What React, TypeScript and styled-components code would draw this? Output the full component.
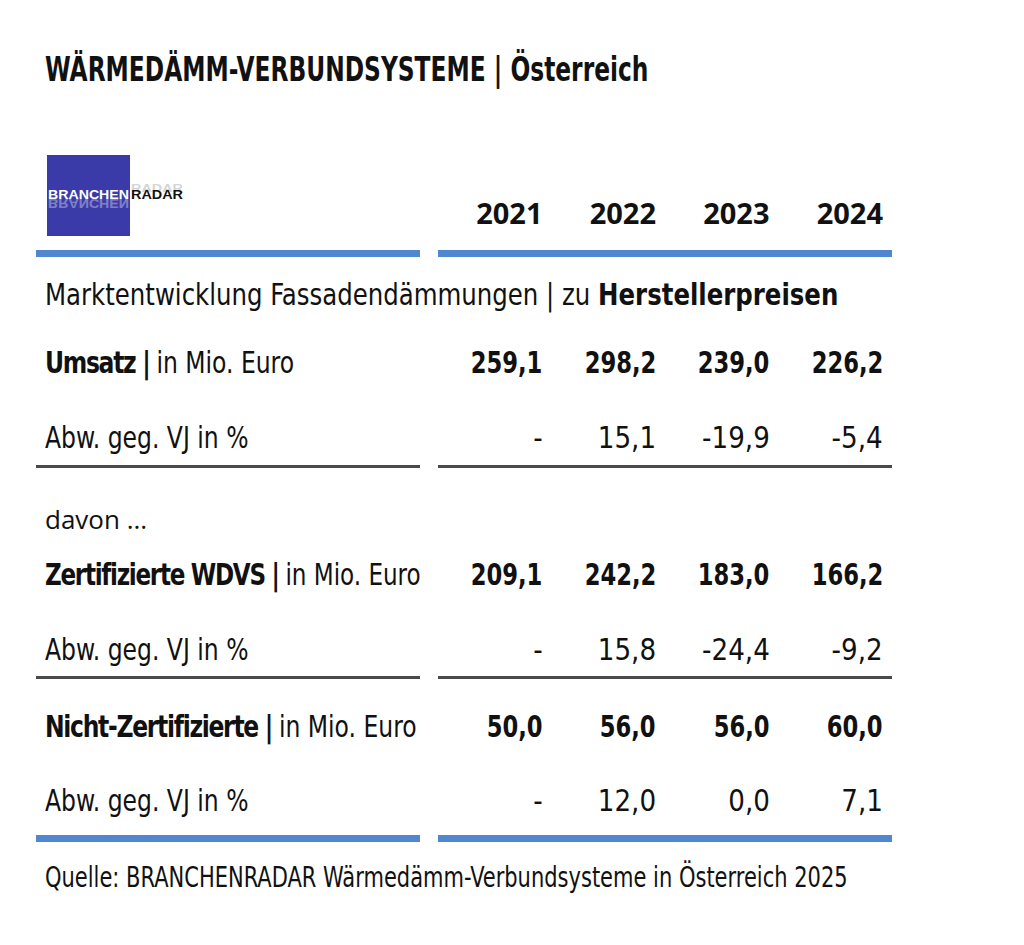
import styled, { createGlobalStyle } from "styled-components";

const COND = `"DejaVu Sans Condensed", "Liberation Sans", sans-serif`;
const WIDE = `"Open Sans", "Liberation Sans", sans-serif`;

const GlobalStyle = createGlobalStyle`
  html, body {
    margin: 0;
    padding: 0;
    background: #ffffff;
  }
  body {
    font-family: ${COND};
    color: #111111;
  }
`;

type RowData = {
  label: React.ReactNode;
  values: string[];
  bold?: boolean;
  squeeze?: number;
  mt: number;
};

const Logo = () => (
  <svg width="150" height="81" viewBox="0 0 150 81">
    <rect x="0" y="0" width="83" height="81" fill="#3a3ba9" />
    <g transform="translate(0 88) scale(1 -1)" opacity="0.35">
      <text x="1" y="44" fill="#ffffff" fontFamily="Liberation Sans, sans-serif" fontWeight="700" fontSize="12" textLength="81" lengthAdjust="spacingAndGlyphs">
        BRANCHEN
      </text>
    </g>
    <text x="84" y="37" fill="#777777" opacity="0.3" fontFamily="Liberation Sans, sans-serif" fontWeight="700" fontSize="11" textLength="52" lengthAdjust="spacingAndGlyphs">
      RADAR
    </text>
    <text x="1" y="44" fill="#ffffff" fontFamily="Liberation Sans, sans-serif" fontWeight="700" fontSize="12" textLength="81" lengthAdjust="spacingAndGlyphs">
      BRANCHEN
    </text>
    <text x="84" y="44" fill="#111111" fontFamily="Liberation Sans, sans-serif" fontWeight="700" fontSize="12" textLength="52" lengthAdjust="spacingAndGlyphs">
      RADAR
    </text>
  </svg>
);

const sections: (RowData | "gray" | "davon")[] = [
  {
    label: (
      <>
        <b>Umsatz | </b>in Mio. Euro
      </>
    ),
    values: ["259,1", "298,2", "239,0", "226,2"],
    bold: true,
    mt: 18,
  },
  { label: "Abw. geg. VJ in %", values: ["-", "15,1", "-19,9", "-5,4"], mt: 25 },
  "gray",
  "davon",
  {
    label: (
      <>
        <b>Zertifizierte WDVS | </b>in Mio. Euro
      </>
    ),
    values: ["209,1", "242,2", "183,0", "166,2"],
    bold: true,
    squeeze: 0.855,
    mt: 6,
  },
  { label: "Abw. geg. VJ in %", values: ["-", "15,8", "-24,4", "-9,2"], mt: 25 },
  "gray",
  {
    label: (
      <>
        <b>Nicht-Zertifizierte | </b>in Mio. Euro
      </>
    ),
    values: ["50,0", "56,0", "56,0", "60,0"],
    bold: true,
    mt: 23,
  },
  { label: "Abw. geg. VJ in %", values: ["-", "12,0", "0,0", "7,1"], mt: 24 },
];

export default function App() {
  return (
    <Page>
      <GlobalStyle />
      <Title>
        <Squeeze $scale={0.786}>WÄRMEDÄMM-VERBUNDSYSTEME | Österreich</Squeeze>
      </Title>

      <HeaderRow>
        <LogoCell>
          <Logo />
        </LogoCell>
        {["2021", "2022", "2023", "2024"].map((y) => (
          <Year key={y}>{y}</Year>
        ))}
      </HeaderRow>
      <Rule $color="#4f87d0" $size={7} $mt={0} />

      <Row $mt={13}>
        <Label>
          <Squeeze $scale={0.905}>
            Marktentwicklung Fassadendämmungen | zu <b className="wide">Herstellerpreisen</b>
          </Squeeze>
        </Label>
      </Row>

      {sections.map((s, i) => {
        if (s === "gray") return <Rule key={i} $color="#4a4a4a" $size={3} $mt={i === 2 ? 2 : 1} />;
        if (s === "davon")
          return (
            <Row key={i} $mt={26}>
              <Davon>davon ...</Davon>
            </Row>
          );
        return (
          <Row key={i} $mt={s.mt}>
            <Label>
              <Squeeze $scale={s.squeeze ?? 0.87}>{s.label}</Squeeze>
            </Label>
            {s.values.map((v, j) => (
              <Value key={j} $bold={s.bold}>
                <Squeeze $scale={s.bold ? 0.84 : 0.97} $right>
                  {v}
                </Squeeze>
              </Value>
            ))}
          </Row>
        );
      })}

      <Rule $color="#4f87d0" $size={7} $mt={9} />
      <Source>
        <Squeeze $scale={0.805}>Quelle: BRANCHENRADAR Wärmedämm-Verbundsysteme in Österreich 2025</Squeeze>
      </Source>
    </Page>
  );
}

const Page = styled.div`
  width: 1024px;
  min-height: 945px;
  padding: 45px 0 0 36px;
  box-sizing: border-box;
  overflow: hidden;
`;

const Squeeze = styled.span<{ $scale: number; $right?: boolean }>`
  display: inline-block;
  white-space: nowrap;
  transform: scaleX(${(p) => p.$scale});
  transform-origin: ${(p) => (p.$right ? "right" : "left")} center;
`;

const Title = styled.h1`
  margin: 0 0 0 9px;
  height: 50px;
  line-height: 50px;
  font-family: ${COND};
  font-size: 33px;
  font-weight: 700;
  color: #111;
  white-space: nowrap;
`;

const HeaderRow = styled.div`
  margin-top: 60px;
  width: 856px;
  height: 95px;
  display: grid;
  grid-template-columns: 402px repeat(4, 1fr);
`;

const LogoCell = styled.div`
  padding-left: 11px;
  align-self: start;
  height: 81px;
`;

const Year = styled.div`
  align-self: end;
  margin-bottom: 12px;
  height: 50px;
  line-height: 50px;
  padding-right: 9px;
  text-align: right;
  font-family: ${WIDE};
  font-size: 29px;
  font-weight: 700;
  color: #111;
`;

const Rule = styled.div<{ $color: string; $size: number; $mt: number }>`
  margin-top: ${(p) => p.$mt}px;
  width: 856px;
  display: flex;
  gap: 18px;
  &::before,
  &::after {
    content: "";
    height: ${(p) => p.$size}px;
    background: ${(p) => p.$color};
  }
  &::before {
    width: 384px;
  }
  &::after {
    flex: 1;
  }
`;

const Row = styled.div<{ $mt: number }>`
  margin-top: ${(p) => p.$mt}px;
  width: 856px;
  height: 50px;
  display: grid;
  grid-template-columns: 402px repeat(4, 1fr);
  align-items: center;
  font-size: 30px;
  line-height: 50px;
`;

const Label = styled.div`
  padding-left: 9px;
  white-space: nowrap;
  grid-column: 1 / -1;
  &:not(:only-child) {
    grid-column: 1;
  }
  b {
    font-weight: 700;
    letter-spacing: -1.5px;
  }
  b.wide {
    letter-spacing: 0;
  }
`;

const Value = styled.div<{ $bold?: boolean }>`
  padding-right: 9px;
  text-align: right;
  font-weight: ${(p) => (p.$bold ? 700 : 400)};
`;

const Davon = styled.div`
  padding-left: 9px;
  font-family: ${WIDE};
  font-size: 26px;
  font-weight: 500;
`;

const Source = styled.div`
  margin-top: 10px;
  padding-left: 9px;
  height: 50px;
  line-height: 50px;
  font-size: 29px;
  white-space: nowrap;
`;
